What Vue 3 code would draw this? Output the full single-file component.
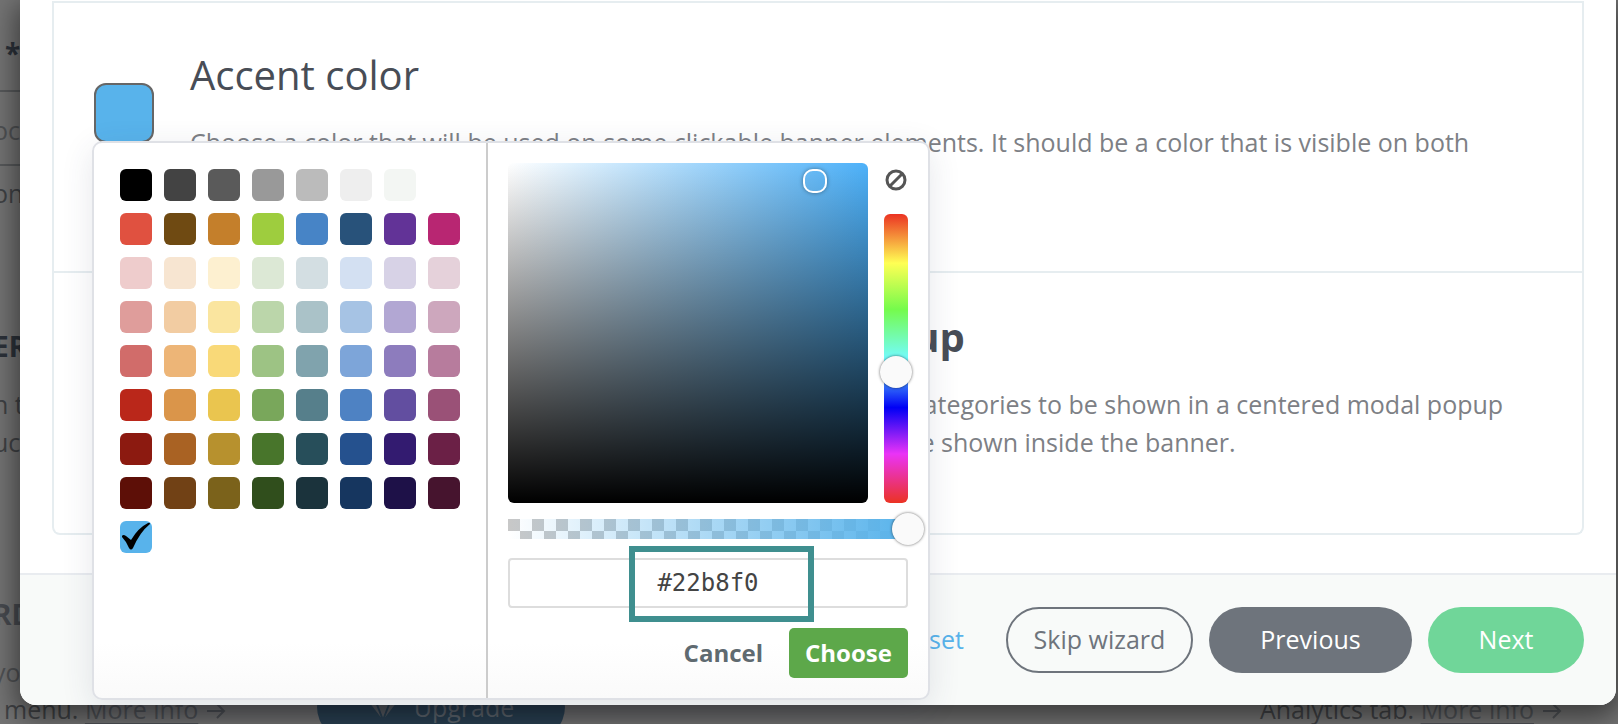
<script setup>
const palette = [
  '#000000', '#434343', '#5a5a5a', '#999999', '#bbbbbb', '#eeeeee', '#f3f6f3', '#ffffff',
  '#e05140', '#6f4a12', '#c47f2b', '#9ecd3e', '#4784c6', '#28527a', '#623397', '#b82672',
  '#eecccc', '#f7e5d1', '#fdf0d0', '#dce8d5', '#d3dee2', '#d3e0f2', '#d7d2e6', '#e5d1da',
  '#df9d9b', '#f2cca2', '#fae59f', '#bbd6aa', '#aac2c8', '#a6c3e4', '#b2a7d3', '#cda7bd',
  '#d16c6a', '#edb577', '#f9d978', '#9dc384', '#80a3ad', '#7da5d9', '#8d7cbd', '#b77c9d',
  '#ba271a', '#da954a', '#eac54f', '#79a75b', '#567f8b', '#4e82c3', '#624ea0', '#9a5177',
  '#8c1a10', '#a96223', '#b7912e', '#48752b', '#274e5a', '#25518e', '#331b70', '#6b2046',
  '#5d0f07', '#714115', '#7b621b', '#304e1c', '#1b333c', '#16365f', '#1e1148', '#46142e',
]
const current = '#58b3eb'
</script>

<template>
  <div class="page">
    <div class="backdrop" aria-hidden="true">
      <div class="strip">
        <strong class="star">*</strong>
        <div class="field">oc</div>
        <div class="frag after-field">on</div>
        <strong class="frag title">ER</strong>
        <div class="frag">n t</div>
        <div class="frag">uc</div>
        <strong class="frag title second">RD</strong>
        <div class="frag faint">yo</div>
      </div>
      <div class="below">
        <p>menu. <a href="#info">More info</a>
          <svg class="arrow" width="20" height="16" viewBox="0 0 20 16"><path d="M1 8H18M11 1 18 8 11 15" fill="none" stroke="currentColor" stroke-width="2" /></svg>
        </p>
        <p>Analytics tab. <a href="#more">More info</a>
          <svg class="arrow" width="20" height="16" viewBox="0 0 20 16"><path d="M1 8H18M11 1 18 8 11 15" fill="none" stroke="currentColor" stroke-width="2" /></svg>
        </p>
      </div>
      <a class="upgrade" href="#upgrade">
        <svg width="30" height="26" viewBox="0 0 30 26"><path d="M6 0H24L29 8 15 26 1 8Z" fill="#5b6166" /><path d="M0 8H30M8 8 15 26 22 8" fill="none" stroke="#2a4254" stroke-width="2" /></svg>
        Upgrade
      </a>
    </div>

    <main class="modal">
      <div class="body">
        <div class="panel">
          <section class="option accent">
            <button class="swatch" aria-label="Accent color"></button>
            <div>
              <h2>Accent color</h2>
              <p>Choose a color that will be used on some clickable banner elements. It should be a color that is visible on both</p>
            </div>
          </section>
          <section class="option popup">
            <h2>Show the Cookie categories as a popup</h2>
            <p>Select this option if you would like for all of the chosen cookie categories to be shown in a centered modal popup</p>
            <p>Otherwise, all of the cookie and other categories are going to be shown inside the banner.</p>
          </section>
        </div>
      </div>
      <footer class="footer">
        <a class="reset" href="#reset">Reset</a>
        <button class="btn outline">Skip wizard</button>
        <button class="btn grey">Previous</button>
        <button class="btn green">Next</button>
      </footer>

      <div class="picker">
        <div class="palette">
          <button v-for="c in palette" :key="c" class="chip" :aria-label="c" :style="{ background: c }"></button>
          <button class="chip" aria-label="Current color" :style="{ background: current }">
            <svg width="32" height="32" viewBox="0 0 32 32"><path d="M2 15Q3 13 6 15L11 19Q18 7 28 2Q30 1 30 3Q20 11 13 27Q11 30 9 27Q6 20 2 16Z" fill="#000" /></svg>
          </button>
        </div>
        <div class="mixer">
          <div class="spectrum">
            <div class="field-sv"><span class="handle"></span></div>
            <div class="side">
              <button class="clear" aria-label="Clear color">
                <svg width="24" height="24" viewBox="0 0 24 24" fill="none" stroke="#555" stroke-width="3"><circle cx="12" cy="12" r="9" /><path d="M6 18 18 6" /></svg>
              </button>
              <div class="hue"><span class="knob hue-knob"></span></div>
            </div>
          </div>
          <div class="alpha"><span class="knob alpha-knob"></span></div>
          <div class="entry">
            <input class="hex" aria-label="Hex color" value="#22b8f0" />
            <span class="marker"></span>
          </div>
          <div class="actions">
            <button class="cancel">Cancel</button>
            <button class="choose">Choose</button>
          </div>
        </div>
      </div>
    </main>
  </div>
</template>

<style>
body { margin: 0; background: #747474; }
</style>

<style scoped>
* { box-sizing: border-box; }
.page {
  position: relative;
  min-height: 100vh;
  overflow: hidden;
  background: #747474;
  font-family: "Open Sans", "Noto Sans", sans-serif;
  font-size: 25px;
  color: #7d8085;
}
button, input { font-family: inherit; font-size: inherit; margin: 0; padding: 0; border: 0; }
button { cursor: pointer; }
h2, p { margin: 0; }
p { line-height: 38px; white-space: nowrap; }

.backdrop { position: absolute; inset: 0; color: #404245; }
.strip { width: 40px; margin-left: -7px; padding-top: 30px; line-height: 38px; }
.star { display: block; height: 60px; padding-left: 12px; font-size: 28px; line-height: 46px; color: #2c323a; }
.field { height: 76px; border: solid #57595b; border-width: 2px 0; line-height: 76px; color: #505254; }
.frag { display: block; }
.after-field { height: 161px; padding-top: 8px; }
.title { height: 58px; font-size: 28px; color: #2c323a; }
.second { height: 58px; margin-top: 134px; color: #484b50; }
.faint { color: #505254; }
.below {
  position: absolute;
  left: 4px;
  right: 56px;
  bottom: -4px;
  display: flex;
  justify-content: space-between;
}
.below a { color: #505357; text-underline-offset: 4px; text-decoration-thickness: 2px; }
.arrow { margin-left: 8px; color: #505357; }
.upgrade {
  position: absolute;
  left: 317px;
  bottom: -16px;
  width: 248px;
  height: 66px;
  border-radius: 33px;
  background: #2a4254;
  color: #626a72;
  display: flex;
  justify-content: center;
  align-items: center;
  gap: 16px;
  text-decoration: none;
}

.modal {
  position: relative;
  margin: 0 2px 0 20px;
  background: #fff;
  border-radius: 0 0 16px 16px;
  box-shadow: 0 8px 28px 4px rgba(0, 0, 0, 0.5);
}
.body { padding: 1px 32px 38px; }
.panel { border: 2px solid #e6edf0; border-top: 0; border-radius: 0 0 8px 8px; }
.option { border-top: 2px solid #e6edf0; }
.accent { height: 270px; display: flex; align-items: flex-start; gap: 36px; padding: 45px 0 0 40px; }
.swatch { flex: none; width: 60px; height: 60px; margin-top: 35px; background: #58b3eb; border: 2px solid #666; border-radius: 12px; }
h2 { font-size: 40px; font-weight: 400; line-height: 54px; color: #484d56; }
.accent p { margin-top: 21px; }
.popup { height: 262px; padding: 37px 0 0 136px; }
.popup h2 { margin-bottom: 21px; font-weight: 700; }
.footer {
  display: flex;
  align-items: center;
  justify-content: flex-end;
  gap: 16px;
  padding: 32px;
  border-top: 2px solid #e9ecf0;
  border-radius: 0 0 16px 16px;
  background: #f8faf9;
}
.reset { margin-right: 26px; padding-bottom: 2px; color: #58b3eb; text-decoration: none; }
.btn { height: 66px; padding-bottom: 2px; border-radius: 33px; color: #fff; }
.outline { width: 187px; background: transparent; border: 2px solid #6e747c; color: #6e747c; }
.grey { width: 203px; background: #6e747c; }
.green { width: 156px; background: #70d699; }

.picker {
  position: absolute;
  left: 72px;
  top: 141px;
  display: flex;
  border: 2px solid #dfe1e6;
  border-radius: 10px;
  background: linear-gradient(#fff 90%, #fafafa);
  box-shadow: 0 8px 32px rgba(50, 60, 90, 0.12);
}
.palette {
  display: grid;
  grid-template-columns: repeat(8, 32px);
  grid-auto-rows: 32px;
  gap: 12px;
  align-content: start;
  padding: 26px 26px 0;
}
.chip { border-radius: 6px; }
.chip svg { display: block; }
.mixer { width: 442px; padding: 20px; border-left: 2px solid #ccc; }
.spectrum { display: flex; gap: 16px; }
.field-sv {
  position: relative;
  width: 360px;
  height: 340px;
  border-radius: 6px;
  background: linear-gradient(transparent, #000), linear-gradient(90deg, #fff, #4db1f9);
}
.handle {
  position: absolute;
  left: 295px;
  top: 6px;
  width: 24px;
  height: 24px;
  border: 2px solid #fff;
  border-radius: 10px;
  box-shadow: 0 0 4px rgba(0, 0, 0, 0.4);
}
.side { display: flex; flex-direction: column; width: 24px; }
.clear { height: 51px; padding-top: 5px; background: none; display: flex; align-items: flex-start; }
.hue {
  position: relative;
  flex: 1;
  border-radius: 6px;
  background: linear-gradient(#eb3323, #ffff54 17%, #75fb4c 33%, #73fbfd 50%, #0000f5 67%, #ea33f7 83%, #eb3323);
}
.knob {
  position: absolute;
  width: 32px;
  height: 32px;
  border-radius: 50%;
  background: #fafafa;
  box-shadow: 0 0 3px rgba(0, 0, 0, 0.6);
}
.hue-knob { left: -4px; top: 142px; }
.alpha {
  position: relative;
  height: 20px;
  margin-top: 16px;
  background: linear-gradient(90deg, transparent, #58b3eb), repeating-conic-gradient(#fff 0 25%, #c8c8c8 0 50%) 0 0 / 24px 24px;
}
.alpha-knob { right: -16px; top: -6px; }
.entry { position: relative; margin-top: 19px; }
.hex {
  display: block;
  width: 100%;
  height: 50px;
  border: 2px solid #ddd;
  border-radius: 4px;
  background: #fff;
  text-align: center;
  font-family: "DejaVu Sans Mono", monospace;
  font-size: 24px;
  color: #444;
}
.marker { position: absolute; left: 121px; top: -12px; width: 185px; height: 76px; border: 6px solid #3f8f8f; }
.actions { display: flex; justify-content: flex-end; align-items: center; gap: 26px; margin-top: 20px; }
.actions button { padding-bottom: 2px; font-size: 24px; font-weight: 700; }
.cancel { background: none; color: #5f6a70; }
.choose { width: 119px; height: 50px; border-radius: 5px; background: #5da84a; color: #fff; }
</style>
